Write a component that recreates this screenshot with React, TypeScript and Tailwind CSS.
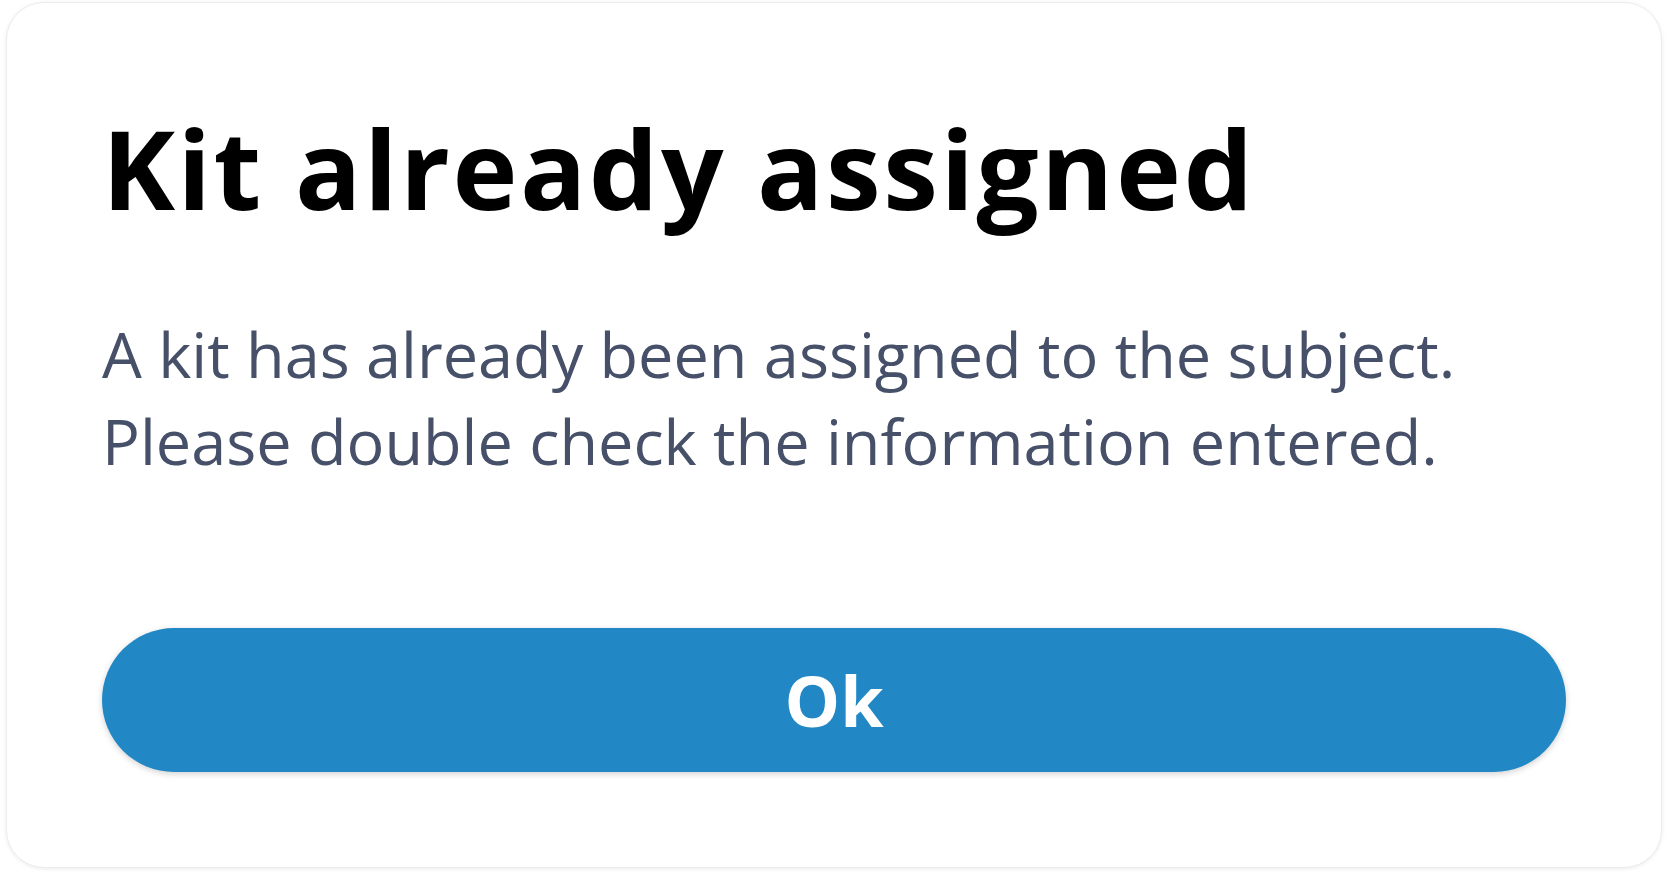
import React from 'react';

const KitAssignedDialog = () => {
  return (
    <div className="w-[1668px] h-[876px] bg-white p-[6px] pt-[2px]">
      <div
        className="flex flex-col h-[866px] rounded-[38px] bg-white border border-[#ececec] shadow-[0_1px_4px_rgba(0,0,0,0.08)] pl-[95px] pr-[95px] pt-[106px]"
        style={{ fontFamily: '"Open Sans", "Noto Sans", sans-serif' }}
      >
        <h1 className="text-[110px] leading-[116px] font-bold text-black tracking-[2.5px]">
          Kit already assigned
        </h1>
        <p className="mt-[85px] text-[63px] leading-[87px] text-[#475069]">
          A kit has already been assigned to the subject.
          <br />
          Please double check the information entered.
        </p>
        <button className="mt-[144px] h-[144px] w-full rounded-full bg-[#2188c5] text-white text-[70px] font-bold shadow-[0_2px_6px_rgba(0,0,0,0.18)]">
          Ok
        </button>
      </div>
    </div>
  );
};

export default KitAssignedDialog;
